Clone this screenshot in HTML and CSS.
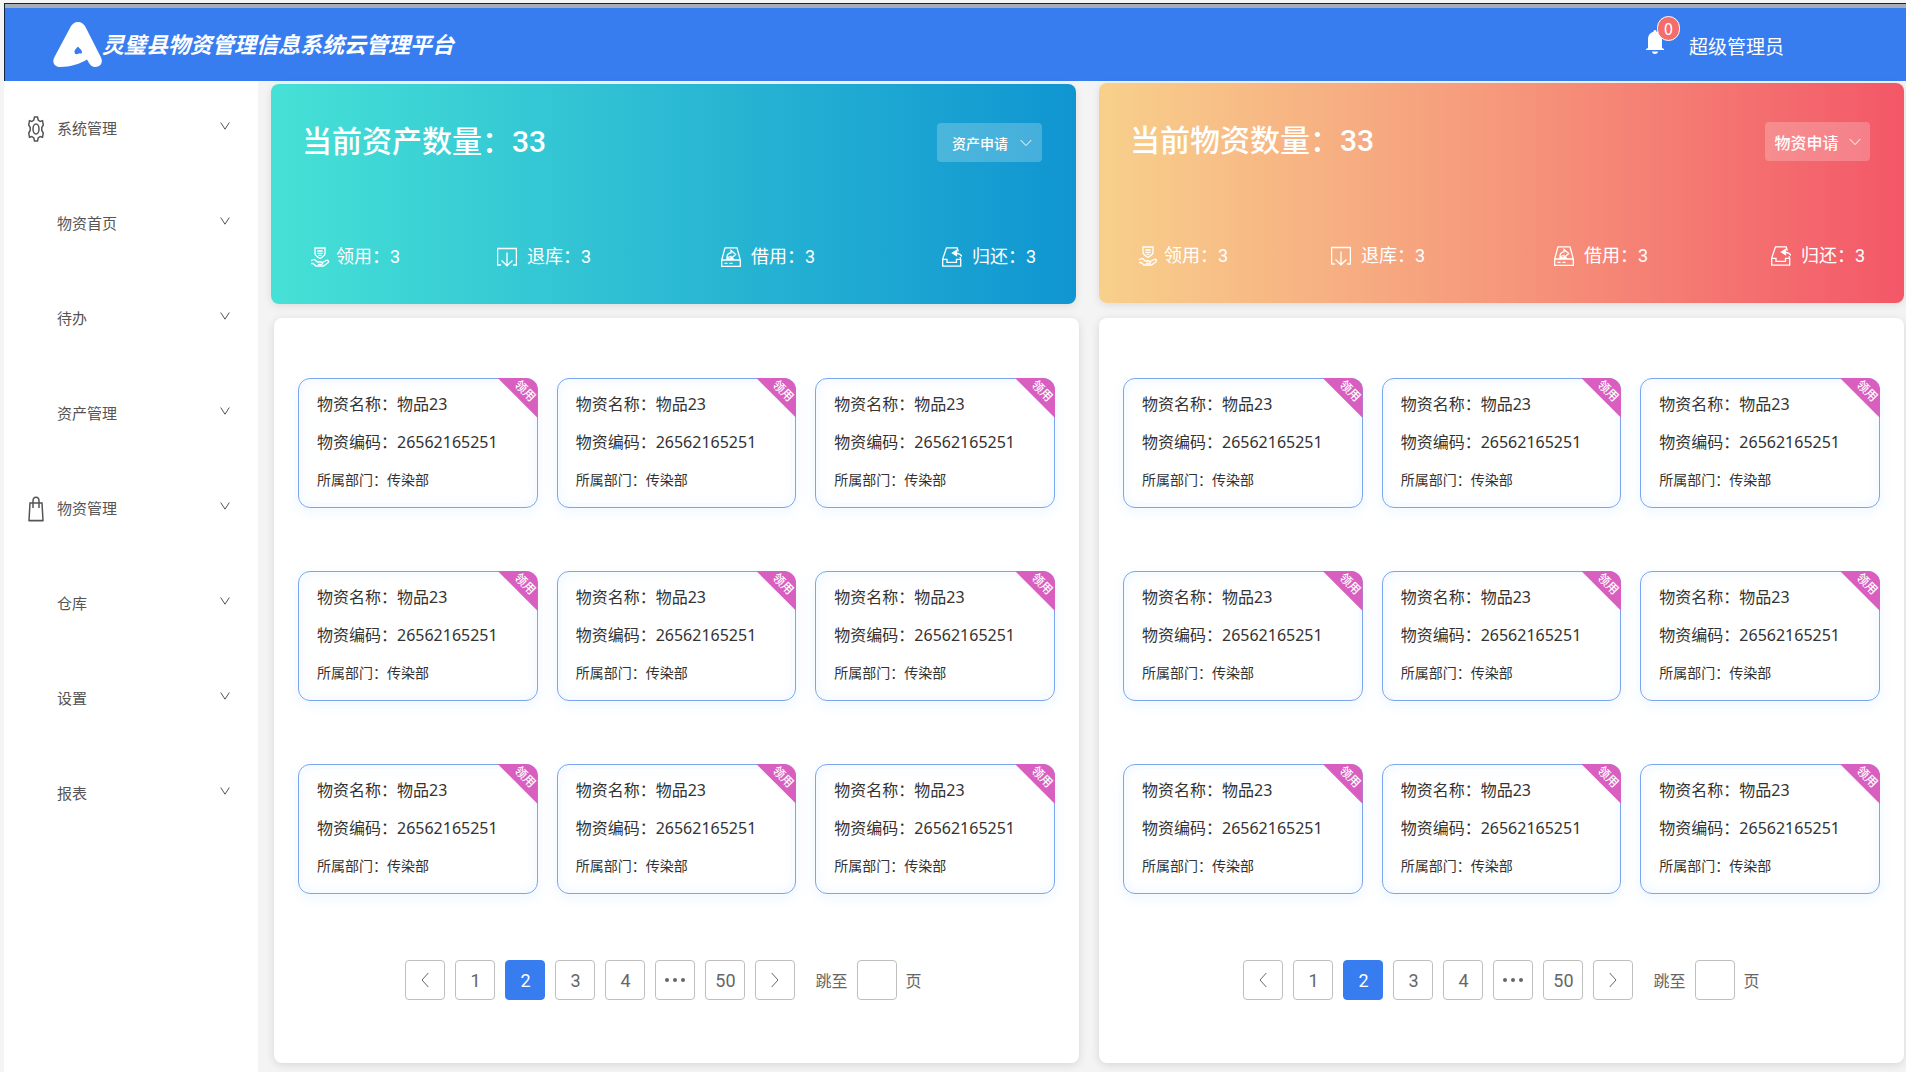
FILE: index.html
```html
<!DOCTYPE html>
<html lang="zh-CN">
<head>
<meta charset="utf-8">
<title>灵璧县物资管理信息系统云管理平台</title>
<link rel="stylesheet" href="styles.css">
</head>
<body>
<svg class="sprite" aria-hidden="true">
  <symbol id="i-chevron" viewBox="0 0 12 8"><path d="M.7 1l5.300 5.600L11.300 1"/></symbol>
  <symbol id="i-fold" viewBox="0 0 10 8"><path d="M.7.5L5 7.200 9.300.5"/></symbol>
  <symbol id="i-receive" viewBox="0 0 20 20"><path d="M5 1h10v5.500c0 2-2.500 3.500-5 5-2.500-1.500-5-3-5-5zM7.300 4h5.400M7.300 6.300h5.400M8.500 8.300h3M1 13.500l3.500-1 3 2.500h4c1.500 0 1.500 2.300 0 2.300H8M11.500 16l4.500-2.500c2-.8 3.300.8 2 2.200L13.500 19H6l-3-2.500H1"/></symbol>
  <symbol id="i-return" viewBox="0 0 20 20"><path d="M4 18H.6V1.500h18.800V18H16M10 5.500V18.500M4.500 13.500l5.500 5.300 5.500-5.300"/></symbol>
  <symbol id="i-borrow" viewBox="0 0 20 20"><path d="M.7 13L4 .8h12L19.300 13v6.300H.7zM.7 13h18.600M3.500 16.300h3M8.500 16.300h3M6 10.500c0-3 1.500-4.500 4-4.700V3.500l4.700 4-4.700 4V9.300c-2 0-3 1-4 2.500zM6 11.800h7"/></symbol>
  <symbol id="i-giveback" viewBox="0 0 20 20"><path d="M16.300 4.500L15.200.8H4.500L.7 12v7.200h18V12l-.7-2M.7 12.300H5v3h9.500v-3h4.200M20 9.500c-1.500-2.500-4-3.500-8.500-3.500"/><path d="M14.500 3.500v5L10.500 6z" fill="currentColor"/></symbol>
  <symbol id="i-prev" viewBox="0 0 8 16"><path d="M7.300 1L1 8l6.300 7"/></symbol>
  <symbol id="i-next" viewBox="0 0 8 16"><path d="M.7 1L7 8l-6.300 7"/></symbol>
</svg>

<header class="topbar">
  <h1 class="brand">
    <svg class="brand-logo" viewBox="0 0 49 45" aria-hidden="true"><path fill-rule="evenodd" d="M25 0c3.500 0 6 2 7.500 5L48 35.500c2.500 5.500-1 9.500-5.500 9.500-3 0-5-1.500-6.500-4l-2-3.500c-6 4-17 7.500-27 7.500C1.500 45-1.500 40 1.500 35L17.500 5C19 2 21.500 0 25 0zM25 24.500c-1.500 2-3.500 3-3.500 5 0 1.800 1 3.500 3 2.500 2.500-1 4.500.5 4.500-2 0-2.300-2.500-3.500-4-5.500z"/></svg>
    <span>灵璧县物资管理信息系统云管理平台</span>
  </h1>
  <div class="account">
    <button class="bell" type="button" aria-label="消息">
      <svg viewBox="0 0 18 24" aria-hidden="true"><path d="M9 0c1 0 1.500.8 1.500 1.800C14.500 2.800 16 6 16 9.500V18l2 1v1H0v-1l2-1V9.500C2 6 3.500 2.800 7.500 1.800 7.500.8 8 0 9 0zM6 21.500h6C12 23 10.700 24 9 24s-3-1-3-2.500z"/></svg>
      <span class="bell-badge">0</span>
    </button>
    <span class="account-name">超级管理员</span>
  </div>
</header>

<div class="layout">
  <nav class="sidebar">
    <button class="nav-item" type="button"><span class="nav-icon"><svg viewBox="0 0 16 26" aria-hidden="true"><path d="M6.500 1h3l.7 3 2 1.500 2.300-.8L15.300 9l-1.500 2.500v3l1.500 2.500-.8 4.300-2.300-.8-2 1.500-.7 3h-3l-.7-3-2-1.500-2.300.8L.7 17l1.500-2.500v-3L.7 9l.8-4.300 2.300.8 2-1.500z"/><ellipse cx="8" cy="13" rx="3" ry="5"/></svg></span><span class="nav-text">系统管理</span><svg class="nav-arrow" aria-hidden="true"><use href="#i-fold"/></svg></button>
    <button class="nav-item" type="button"><span class="nav-icon"></span><span class="nav-text">物资首页</span><svg class="nav-arrow" aria-hidden="true"><use href="#i-fold"/></svg></button>
    <button class="nav-item" type="button"><span class="nav-icon"></span><span class="nav-text">待办</span><svg class="nav-arrow" aria-hidden="true"><use href="#i-fold"/></svg></button>
    <button class="nav-item" type="button"><span class="nav-icon"></span><span class="nav-text">资产管理</span><svg class="nav-arrow" aria-hidden="true"><use href="#i-fold"/></svg></button>
    <button class="nav-item" type="button"><span class="nav-icon"><svg viewBox="0 0 16 26" aria-hidden="true"><path d="M2 7h12l1 17.500H1zM5 12V5c0-5 6-5 6 0v7M1 24.800h14"/></svg></span><span class="nav-text">物资管理</span><svg class="nav-arrow" aria-hidden="true"><use href="#i-fold"/></svg></button>
    <button class="nav-item" type="button"><span class="nav-icon"></span><span class="nav-text">仓库</span><svg class="nav-arrow" aria-hidden="true"><use href="#i-fold"/></svg></button>
    <button class="nav-item" type="button"><span class="nav-icon"></span><span class="nav-text">设置</span><svg class="nav-arrow" aria-hidden="true"><use href="#i-fold"/></svg></button>
    <button class="nav-item" type="button"><span class="nav-icon"></span><span class="nav-text">报表</span><svg class="nav-arrow" aria-hidden="true"><use href="#i-fold"/></svg></button>
  </nav>

  <main class="content">
    <div class="column column-asset">
      <section class="banner banner-asset">
        <div class="banner-head">
          <h2>当前资产数量：33</h2>
          <button class="apply apply-small" type="button">资产申请<svg aria-hidden="true"><use href="#i-chevron"/></svg></button>
        </div>
        <ul class="stats">
          <li><svg aria-hidden="true"><use href="#i-receive"/></svg>领用：3</li>
          <li><svg aria-hidden="true"><use href="#i-return"/></svg>退库：3</li>
          <li><svg aria-hidden="true"><use href="#i-borrow"/></svg>借用：3</li>
          <li><svg aria-hidden="true"><use href="#i-giveback"/></svg>归还：3</li>
        </ul>
      </section>
      <section class="panel">
        <div class="cards">
          <article class="card"><p>物资名称：物品23</p><p>物资编码：26562165251</p><p class="dept">所属部门：传染部</p><span class="ribbon"><b>领用</b></span></article>
          <article class="card"><p>物资名称：物品23</p><p>物资编码：26562165251</p><p class="dept">所属部门：传染部</p><span class="ribbon"><b>领用</b></span></article>
          <article class="card"><p>物资名称：物品23</p><p>物资编码：26562165251</p><p class="dept">所属部门：传染部</p><span class="ribbon"><b>领用</b></span></article>
          <article class="card"><p>物资名称：物品23</p><p>物资编码：26562165251</p><p class="dept">所属部门：传染部</p><span class="ribbon"><b>领用</b></span></article>
          <article class="card"><p>物资名称：物品23</p><p>物资编码：26562165251</p><p class="dept">所属部门：传染部</p><span class="ribbon"><b>领用</b></span></article>
          <article class="card"><p>物资名称：物品23</p><p>物资编码：26562165251</p><p class="dept">所属部门：传染部</p><span class="ribbon"><b>领用</b></span></article>
          <article class="card"><p>物资名称：物品23</p><p>物资编码：26562165251</p><p class="dept">所属部门：传染部</p><span class="ribbon"><b>领用</b></span></article>
          <article class="card"><p>物资名称：物品23</p><p>物资编码：26562165251</p><p class="dept">所属部门：传染部</p><span class="ribbon"><b>领用</b></span></article>
          <article class="card"><p>物资名称：物品23</p><p>物资编码：26562165251</p><p class="dept">所属部门：传染部</p><span class="ribbon"><b>领用</b></span></article>
        </div>
        <div class="pager">
          <button type="button" aria-label="上一页"><svg aria-hidden="true"><use href="#i-prev"/></svg></button>
          <button type="button">1</button>
          <button type="button" class="current">2</button>
          <button type="button">3</button>
          <button type="button">4</button>
          <button type="button" class="more" aria-label="更多"><i></i><i></i><i></i></button>
          <button type="button">50</button>
          <button type="button" aria-label="下一页"><svg aria-hidden="true"><use href="#i-next"/></svg></button>
          <label class="jump">跳至<input type="text">页</label>
        </div>
      </section>
    </div>

    <div class="column column-goods">
      <section class="banner banner-goods">
        <div class="banner-head">
          <h2>当前物资数量：33</h2>
          <button class="apply" type="button">物资申请<svg aria-hidden="true"><use href="#i-chevron"/></svg></button>
        </div>
        <ul class="stats">
          <li><svg aria-hidden="true"><use href="#i-receive"/></svg>领用：3</li>
          <li><svg aria-hidden="true"><use href="#i-return"/></svg>退库：3</li>
          <li><svg aria-hidden="true"><use href="#i-borrow"/></svg>借用：3</li>
          <li><svg aria-hidden="true"><use href="#i-giveback"/></svg>归还：3</li>
        </ul>
      </section>
      <section class="panel">
        <div class="cards">
          <article class="card"><p>物资名称：物品23</p><p>物资编码：26562165251</p><p class="dept">所属部门：传染部</p><span class="ribbon"><b>领用</b></span></article>
          <article class="card"><p>物资名称：物品23</p><p>物资编码：26562165251</p><p class="dept">所属部门：传染部</p><span class="ribbon"><b>领用</b></span></article>
          <article class="card"><p>物资名称：物品23</p><p>物资编码：26562165251</p><p class="dept">所属部门：传染部</p><span class="ribbon"><b>领用</b></span></article>
          <article class="card"><p>物资名称：物品23</p><p>物资编码：26562165251</p><p class="dept">所属部门：传染部</p><span class="ribbon"><b>领用</b></span></article>
          <article class="card"><p>物资名称：物品23</p><p>物资编码：26562165251</p><p class="dept">所属部门：传染部</p><span class="ribbon"><b>领用</b></span></article>
          <article class="card"><p>物资名称：物品23</p><p>物资编码：26562165251</p><p class="dept">所属部门：传染部</p><span class="ribbon"><b>领用</b></span></article>
          <article class="card"><p>物资名称：物品23</p><p>物资编码：26562165251</p><p class="dept">所属部门：传染部</p><span class="ribbon"><b>领用</b></span></article>
          <article class="card"><p>物资名称：物品23</p><p>物资编码：26562165251</p><p class="dept">所属部门：传染部</p><span class="ribbon"><b>领用</b></span></article>
          <article class="card"><p>物资名称：物品23</p><p>物资编码：26562165251</p><p class="dept">所属部门：传染部</p><span class="ribbon"><b>领用</b></span></article>
        </div>
        <div class="pager">
          <button type="button" aria-label="上一页"><svg aria-hidden="true"><use href="#i-prev"/></svg></button>
          <button type="button">1</button>
          <button type="button" class="current">2</button>
          <button type="button">3</button>
          <button type="button">4</button>
          <button type="button" class="more" aria-label="更多"><i></i><i></i><i></i></button>
          <button type="button">50</button>
          <button type="button" aria-label="下一页"><svg aria-hidden="true"><use href="#i-next"/></svg></button>
          <label class="jump">跳至<input type="text">页</label>
        </div>
      </section>
    </div>
  </main>
</div>
</body>
</html>
```
FILE: styles.css
```css
* { box-sizing: border-box; }

body {
  margin: 0;
  padding: 3px 0 0 4px;
  min-height: 100vh;
  display: flex;
  flex-direction: column;
  background: #f4f4f4;
  color: #333;
  font-family: "Noto Sans CJK SC", sans-serif;
}

h1, h2, p, ul { margin: 0; padding: 0; font-weight: 400; }
ul { list-style: none; }
button { font: inherit; color: inherit; border: 0; background: none; padding: 0; cursor: pointer; }
svg { fill: none; stroke: currentColor; flex: none; }
.sprite { position: absolute; width: 0; height: 0; }

/* Top bar */
.topbar {
  display: flex;
  justify-content: space-between;
  align-items: center;
  height: 78px;
  padding: 0 122px 0 48px;
  border-top: 1px solid #10263f;
  border-left: 1px solid #10263f;
  background: #387df0;
  box-shadow: inset 0 4px #a5adb5;
  color: #fff;
}
.brand { display: flex; align-items: center; font-size: 22px; line-height: 30px; font-weight: 700; font-style: italic; }
.brand-logo { width: 49px; height: 45px; fill: #fff; stroke: none; margin-top: 4px; }
.account { display: flex; align-items: center; gap: 25px; padding-top: 7px; }
.account-name { font-size: 19px; line-height: 28px; }
.bell { position: relative; display: flex; margin-bottom: 9px; }
.bell svg { width: 18px; height: 24px; fill: #fff; stroke: none; }
.bell-badge {
  position: absolute;
  left: 11px;
  top: -14px;
  width: 23px;
  height: 25px;
  border: 1px solid #fff;
  border-radius: 12px;
  background: #f56c6c;
  font-size: 16px;
  line-height: 22px;
  text-align: center;
}

/* Sidebar */
.layout { flex: 1; display: flex; }
.sidebar { flex: none; width: 254px; background: #fff; }
.nav-item {
  display: flex;
  align-items: center;
  width: 100%;
  height: 95px;
  padding: 0 28px 0 24px;
  color: #555;
  font-size: 15px;
  text-align: left;
}
.nav-icon { width: 29px; display: flex; }
.nav-icon svg { width: 16px; height: 26px; stroke-width: 1.5; }
.nav-text { flex: 1; padding-bottom: 3px; }
.nav-arrow { width: 10px; height: 8px; margin-bottom: 6px; }

/* Content columns */
.content {
  flex: 1;
  display: grid;
  grid-template-columns: 808fr 805fr;
  gap: 20px;
  padding: 2px 2px 9px 13px;
}
.column { display: flex; flex-direction: column; gap: 15px; }
.column-asset { padding-top: 1px; gap: 14px; }
.column-asset .banner { margin-right: 3px; }
.column-asset .panel { margin-left: 3px; }

.banner {
  height: 220px;
  padding: 36px 34px 0 31px;
  border-radius: 8px;
  color: #fff;
  font-family: Roboto, "Noto Sans CJK SC", sans-serif;
  box-shadow: 0 2px 8px rgba(0, 0, 0, .1);
}
.banner-asset { background: linear-gradient(90deg, #46e1d6, #2bbad3 50%, #1095d1); }
.banner-goods { background: linear-gradient(90deg, #f8d08b, #f69a7c 48%, #f35768); }
.banner-head { display: flex; justify-content: space-between; align-items: flex-start; }
.banner h2 { font-size: 30px; line-height: 44px; font-weight: 500; }
.apply {
  display: flex;
  align-items: center;
  justify-content: center;
  gap: 10px;
  width: 105px;
  height: 39px;
  margin-top: 3px;
  border-radius: 4px;
  background: rgba(255, 255, 255, .22);
  font-size: 16px;
  font-weight: 500;
}
.apply-small { font-size: 14px; gap: 12px; padding-left: 5px; }
.apply svg { width: 12px; height: 8px; }
.stats {
  display: grid;
  grid-template-columns: 187fr 224fr 221fr 96fr;
  padding: 0 4px 0 8px;
  margin-top: 79px;
  font-size: 18px;
  line-height: 28px;
}
.banner-goods .stats { grid-template-columns: 193fr 223fr 217fr 95fr; }
.stats li { display: flex; align-items: center; gap: 10px; white-space: nowrap; }
.stats li:first-child { gap: 6px; }
.stats svg { width: 20px; height: 20px; stroke-width: 1.3; }

/* Card panel */
.panel {
  flex: 1;
  padding: 60px 24px;
  border-radius: 8px;
  background: #fff;
  box-shadow: 0 2px 10px rgba(0, 0, 0, .12);
}
.cards { display: grid; grid-template-columns: repeat(3, 1fr); gap: 63px 19px; }
.card {
  position: relative;
  padding: 6px 18px 8px;
  border: 1px solid #7ba5ec;
  border-radius: 12px;
  box-shadow: 0 4px 14px rgba(64, 170, 255, .09), inset 0 0 14px rgba(64, 170, 255, .09);
  font-family: "Noto Sans", "Noto Sans CJK SC", sans-serif;
  font-size: 16px;
  line-height: 38px;
  white-space: nowrap;
}
.card .dept { font-size: 14px; line-height: 38px; }
.ribbon {
  position: absolute;
  top: -1px;
  right: -1px;
  width: 40px;
  height: 40px;
  border-top-right-radius: 12px;
  background: #d85fc0;
  clip-path: polygon(0 0, 100% 0, 100% 100%);
}
.ribbon b {
  position: absolute;
  top: 4px;
  right: 1px;
  font-size: 12px;
  line-height: 18px;
  font-weight: 500;
  color: #fff;
  transform: rotate(45deg);
}

/* Pagination */
.pager {
  display: flex;
  justify-content: center;
  gap: 10px;
  margin-top: 66px;
  color: #666;
  font-family: Roboto, "Noto Sans CJK SC", sans-serif;
  font-size: 18px;
}
.column-asset .pager { padding-right: 26px; }
.pager button {
  display: flex;
  align-items: center;
  justify-content: center;
  width: 40px;
  height: 40px;
  border: 1px solid #bfbfbf;
  border-radius: 4px;
}
.pager .current { border-color: #387df0; background: #387df0; color: #fff; }
.pager svg { width: 8px; height: 16px; }
.pager .more { gap: 4px; }
.more i { width: 4px; height: 4px; border-radius: 50%; background: #666; }
.jump { display: flex; align-items: center; gap: 9px; margin-left: 10px; font-size: 16px; }
.jump input { width: 40px; height: 40px; border: 1px solid #bfbfbf; border-radius: 4px; padding: 0 8px; font: inherit; }
```
